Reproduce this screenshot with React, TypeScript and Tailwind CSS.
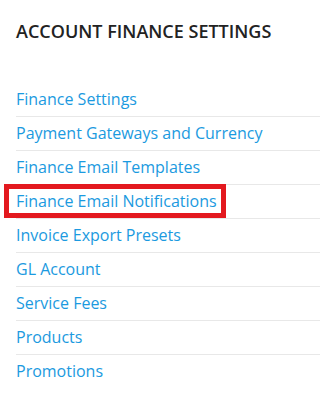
const links = [
  "Finance Settings",
  "Payment Gateways and Currency",
  "Finance Email Templates",
  "Finance Email Notifications",
  "Invoice Export Presets",
  "GL Account",
  "Service Fees",
  "Products",
  "Promotions",
];

export default function App() {
  return (
    <div className="h-[398px] w-[320px] bg-white font-['Open_Sans',sans-serif]">
      <h2 className="pl-4 pt-[19px] text-[18px] font-semibold leading-6 text-[#222]">
        ACCOUNT FINANCE SETTINGS
      </h2>
      <ul className="ml-4 mt-[40px]">
        {links.map((label, i) => (
          <li
            key={label}
            className={
              "relative py-[6px] leading-[21px] " +
              (i < links.length - 1 ? "border-b border-[#e8e8e8]" : "")
            }
          >
            <a href="#" className="text-[16px] leading-[21px] text-[#1b9ae0]">
              {label}
            </a>
            {label === "Finance Email Notifications" && (
              <span className="pointer-events-none absolute -left-3 -top-px h-[34px] w-[222px] border-[5px] border-[#e3191f]" />
            )}
          </li>
        ))}
      </ul>
    </div>
  );
}
